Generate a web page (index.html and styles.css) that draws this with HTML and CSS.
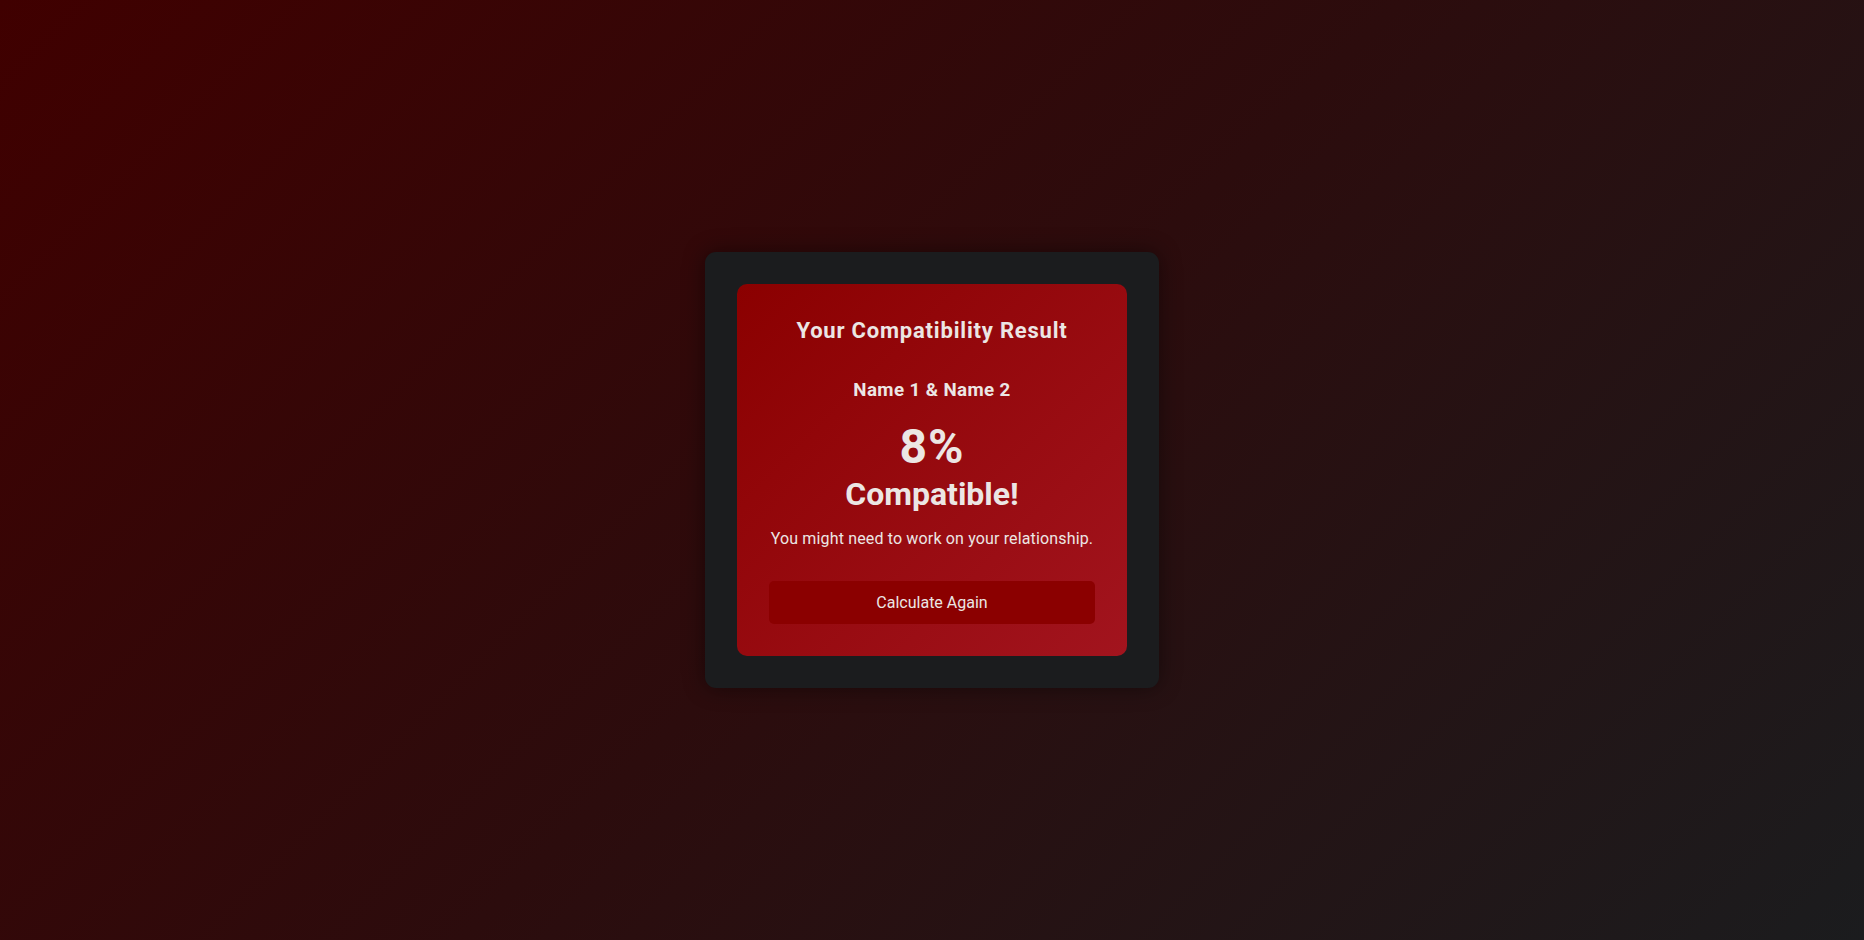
FILE: index.html
```html
<!DOCTYPE html>
<html lang="en">
<head>
<meta charset="utf-8">
<title>Compatibility Result</title>
<link rel="stylesheet" href="styles.css">
</head>
<body>
  <main class="container">
    <section class="result">
      <h2 class="result-title">Your Compatibility Result</h2>
      <h3 class="result-names">Name 1 &amp; Name 2</h3>
      <div class="result-percent">8%</div>
      <div class="result-label">Compatible!</div>
      <p class="result-message">You might need to work on your relationship.</p>
      <button class="again-btn" type="button">Calculate Again</button>
    </section>
  </main>
</body>
</html>
```

FILE: styles.css
```css
html, body {
  margin: 0;
  padding: 0;
  height: 100%;
}

body {
  font-family: Roboto, "Open Sans", "Liberation Sans", sans-serif;
  color: #ece6e4;
  background: linear-gradient(135deg, #400000 0%, #2c0c0d 50%, #1b1c1e 100%);
  display: flex;
  align-items: center;
  justify-content: center;
  min-height: 940px;
}

.container {
  background: #1b1c1e;
  border-radius: 11px;
  padding: 32px;
  box-shadow: 0 0 22px rgba(0, 0, 0, 0.45);
}

.result {
  width: 326px;
  padding: 32px;
  border-radius: 10px;
  background: linear-gradient(135deg, #8b0000 0%, #a2141e 100%);
  display: flex;
  flex-direction: column;
  align-items: center;
  text-align: center;
}

.result-title {
  margin: 0;
  font-size: 22px;
  line-height: 30px;
  font-weight: 700;
  letter-spacing: 0.8px;
  white-space: nowrap;
}

.result-names {
  margin: 32px 0 0;
  font-size: 18.72px;
  line-height: 24px;
  font-weight: 700;
  letter-spacing: 0.4px;
  white-space: nowrap;
}

.result-percent {
  margin-top: 18px;
  font-size: 48px;
  line-height: 54px;
  font-weight: 700;
  letter-spacing: 1px;
}

.result-label {
  font-size: 32px;
  line-height: 40px;
  font-weight: 700;
}

.result-message {
  margin: 13px 0 0;
  font-size: 16px;
  line-height: 24px;
  letter-spacing: 0.15px;
  white-space: nowrap;
}

.again-btn {
  margin-top: 30px;
  width: 100%;
  height: 43px;
  border: none;
  border-radius: 5px;
  background: #8b0000;
  color: #ece6e4;
  font-family: inherit;
  font-size: 16px;
  line-height: 19px;
  cursor: pointer;
}
```
